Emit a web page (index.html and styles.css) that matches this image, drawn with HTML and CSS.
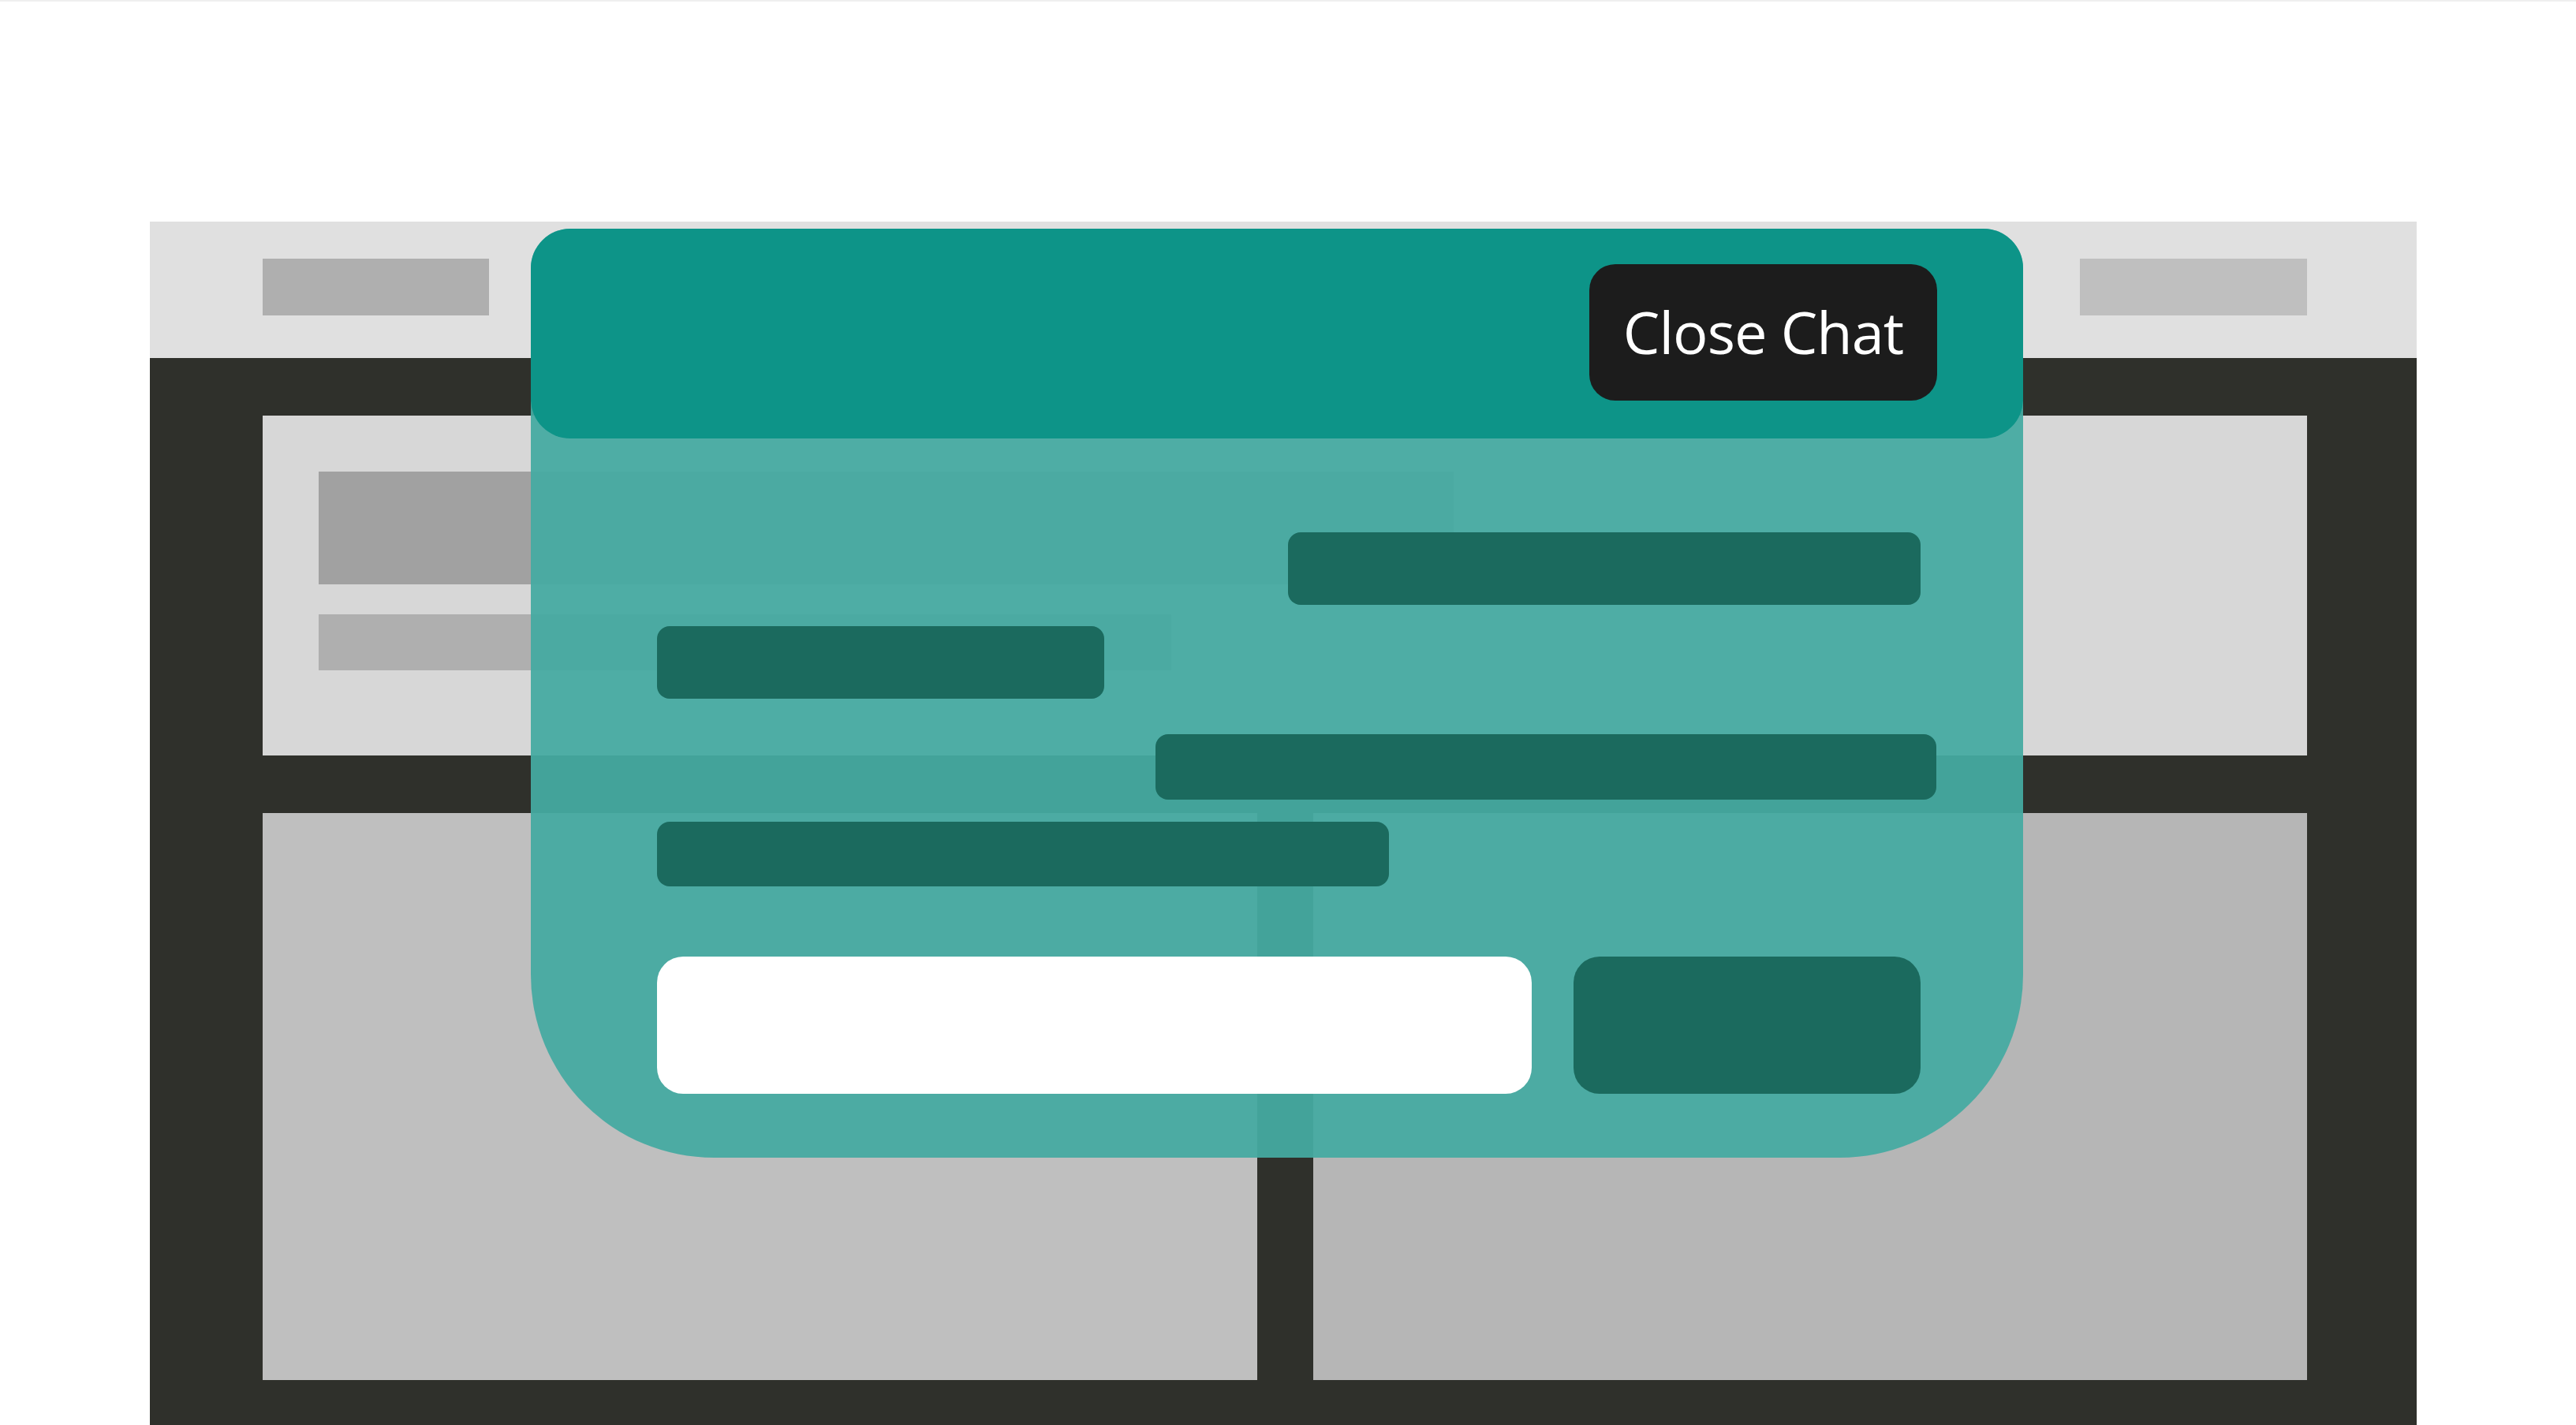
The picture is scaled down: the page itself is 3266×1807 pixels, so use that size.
FILE: index.html
```html
<!DOCTYPE html>
<html lang="en">
<head>
<meta charset="utf-8">
<title>Chat widget</title>
<link rel="stylesheet" href="styles.css">
</head>
<body>
<div class="page">
  <div class="site">
    <header class="site-header">
      <div class="logo"></div>
      <div class="nav"></div>
    </header>
    <main class="site-body">
      <section class="hero">
        <div class="hero-title"></div>
        <div class="hero-sub"></div>
      </section>
      <div class="cards">
        <div class="card card-a"></div>
        <div class="card card-b"></div>
      </div>
    </main>
  </div>

  <div class="chat">
    <div class="chat-header">
      <button class="close-btn" type="button">Close Chat</button>
    </div>
    <div class="messages">
      <div class="bubble bubble-out b1"></div>
      <div class="bubble bubble-in b2"></div>
      <div class="bubble bubble-out b3"></div>
      <div class="bubble bubble-in b4"></div>
      <div class="composer">
        <input class="composer-input" type="text" aria-label="Message">
        <button class="send-btn" type="button" aria-label="Send"></button>
      </div>
    </div>
  </div>
</div>
</body>
</html>
```

FILE: styles.css
```css
* { box-sizing: border-box; }

html, body {
  margin: 0;
  padding: 0;
  background: #ffffff;
}

body {
  border-top: 2px solid #efefef;
  font-family: "Open Sans", "Noto Sans", sans-serif;
  overflow: hidden;
}

.page {
  position: relative;
  padding-top: 279px;
  height: 1805px;
}

.site {
  margin-left: 190px;
  width: 2874px;
  background: #2f302b;
}

.site-header {
  height: 173px;
  background: #e0e0e0;
  display: flex;
  justify-content: space-between;
  align-items: flex-start;
  padding: 47px 139px 0 143px;
}

.logo {
  width: 287px;
  height: 72px;
  background: #afafaf;
}

.nav {
  width: 288px;
  height: 72px;
  background: #bfbfbf;
}

.site-body {
  display: flex;
  flex-direction: column;
  gap: 73px;
  padding: 73px 139px 57px 143px;
}

.hero {
  height: 431px;
  background: #d7d7d7;
  padding: 71px;
  display: flex;
  flex-direction: column;
  gap: 38px;
}

.hero-title {
  width: 1439px;
  height: 143px;
  background: #a1a1a1;
}

.hero-sub {
  width: 1081px;
  height: 71px;
  background: #afafaf;
}

.cards {
  display: grid;
  grid-template-columns: 1261px 1260px;
  gap: 71px;
  height: 719px;
}

.card-a { background: #bfbfbf; }
.card-b { background: #b6b6b6; }

/* Chat widget overlays the page */
.chat {
  position: absolute;
  left: 673px;
  top: 288px;
  width: 1892px;
  height: 1178px;
  background: rgba(69, 170, 161, 0.94);
  border-radius: 50px 50px 232px 232px;
  display: flex;
  flex-direction: column;
}

.chat-header {
  height: 266px;
  flex: none;
  background: #0d9488;
  border-radius: 50px;
  display: flex;
  justify-content: flex-end;
  align-items: flex-start;
  padding: 45px 109px 0 0;
}

.close-btn {
  width: 441px;
  height: 173px;
  border: none;
  border-radius: 33px;
  background: #1c1c1c;
  color: #ffffff;
  font-family: "Open Sans", "Noto Sans", sans-serif;
  font-size: 74px;
  letter-spacing: -1px;
  line-height: 1;
  padding: 0 0 2px 0;
  display: flex;
  align-items: center;
  justify-content: center;
}

.messages {
  display: flex;
  flex-direction: column;
  padding: 119px 130px 0 160px;
}

.bubble {
  background: #1b6a5e;
  border-radius: 16px;
}

.bubble-out { align-self: flex-end; }
.bubble-in { align-self: flex-start; }

.b1 { width: 802px; height: 92px; }
.b2 { width: 567px; height: 92px; margin-top: 27px; }
.b3 { width: 990px; height: 83px; margin-top: 45px; margin-right: -20px; }
.b4 { width: 928px; height: 82px; margin-top: 28px; }

.composer {
  display: flex;
  gap: 53px;
  margin-top: 89px;
  height: 174px;
}

.composer-input {
  width: 1109px;
  height: 174px;
  border: none;
  outline: none;
  border-radius: 33px;
  background: #ffffff;
  padding: 0 40px;
  font-size: 60px;
  font-family: "Open Sans", "Noto Sans", sans-serif;
}

.send-btn {
  width: 440px;
  height: 174px;
  border: none;
  border-radius: 33px;
  background: #1b6a5e;
  padding: 0;
}
```
